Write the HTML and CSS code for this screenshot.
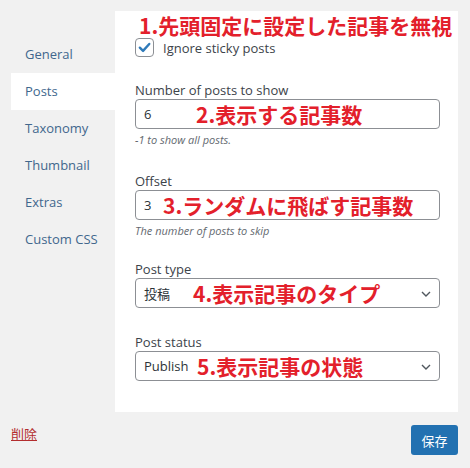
FILE: index.html
```html
<!DOCTYPE html>
<html lang="ja">
<head>
<meta charset="utf-8">
<link rel="stylesheet" href="styles.css">
</head>
<body>
<div class="wrap">
  <div class="main">
    <ul class="tabs">
      <li class="tab">General</li>
      <li class="tab active">Posts</li>
      <li class="tab">Taxonomy</li>
      <li class="tab">Thumbnail</li>
      <li class="tab">Extras</li>
      <li class="tab">Custom CSS</li>
    </ul>
    <div class="panel">
      <span class="note note1">1.先頭固定に設定した記事を無視</span>
      <label class="check-row">
        <span class="checkbox">
          <svg viewBox="0 0 20 20" width="20" height="20"><path d="M4.5 10.2 L8.3 14 L15.6 5.8" fill="none" stroke="#2f7ab9" stroke-width="2.8" stroke-linecap="round" stroke-linejoin="round"/></svg>
        </span>
        <span class="check-label">Ignore sticky posts</span>
      </label>

      <div class="field">
        <div class="label">Number of posts to show</div>
        <div class="control">
          <span class="value">6</span>
          <span class="note" style="left:60px">2.表示する記事数</span>
        </div>
        <div class="help">-1 to show all posts.</div>
      </div>

      <div class="field field-b">
        <div class="label">Offset</div>
        <div class="control">
          <span class="value">3</span>
          <span class="note" style="left:27px">3.ランダムに飛ばす記事数</span>
        </div>
        <div class="help">The number of posts to skip</div>
      </div>

      <div class="field">
        <div class="label">Post type</div>
        <div class="control select">
          <span class="value">投稿</span>
          <span class="note" style="left:57px">4.表示記事のタイプ</span>
          <svg class="chev" viewBox="0 0 10 6" width="10" height="6"><path d="M1 1 L5 5 L9 1" fill="none" stroke="#50575e" stroke-width="1.4"/></svg>
        </div>
      </div>

      <div class="field last">
        <div class="label">Post status</div>
        <div class="control select">
          <span class="value">Publish</span>
          <span class="note" style="left:61px">5.表示記事の状態</span>
          <svg class="chev" viewBox="0 0 10 6" width="10" height="6"><path d="M1 1 L5 5 L9 1" fill="none" stroke="#50575e" stroke-width="1.4"/></svg>
        </div>
      </div>
    </div>
  </div>
  <div class="footer">
    <a class="delete" href="#">削除</a>
    <button class="save">保存</button>
  </div>
</div>
</body>
</html>
```

FILE: styles.css
```css
* { box-sizing: border-box; }
html, body { margin: 0; padding: 0; }
body {
  background: #f1f1f1;
  font-family: "Open Sans", "Noto Sans CJK JP", sans-serif;
  font-size: 13px;
  color: #3c434a;
  width: 470px;
  height: 468px;
  overflow: hidden;
}
.wrap { padding: 11px 12px 0 11px; }
.main { display: flex; }
.tabs {
  list-style: none;
  margin: 0;
  padding: 25px 0 0 0;
  width: 104px;
  flex: none;
}
.tab {
  height: 37px;
  line-height: 37px;
  padding-left: 14px;
  color: #41678d;
  font-size: 13px;
}
.tab.active { background: #fff; }
.panel {
  position: relative;
  flex: 1;
  background: #fff;
  height: 401px;
  padding: 27px 18px 0 20px;
}
.note {
  position: absolute;
  color: #e3202b;
  font-family: "Noto Sans CJK JP", sans-serif;
  font-weight: 700;
  font-size: 21px;
  line-height: 30px;
  top: -1px;
  white-space: nowrap;
  letter-spacing: 0;
}
.note1 { left: 24px; top: 3px; line-height: 22px; }
.check-row {
  display: flex;
  align-items: center;
  height: 19px;
  margin-bottom: 24px;
}
.checkbox {
  width: 19px;
  height: 19px;
  border: 1px solid #8c8f94;
  border-radius: 4px;
  display: flex;
  align-items: center;
  justify-content: center;
  flex: none;
}
.checkbox svg { display: block; width: 17px; height: 17px; }
.check-label { margin-left: 9px; color: #3c434a; }
.field { margin-bottom: 25px; }
.field-b { margin-bottom: 22px; }
.field.last { margin-bottom: 0; }
.label { line-height: 18px; height: 18px; }
.control {
  position: relative;
  height: 30px;
  border: 1px solid #8c8f94;
  border-radius: 4px;
  display: flex;
  align-items: center;
  padding-left: 8px;
}
.value { color: #2c3338; font-size: 13px; }
.chev { position: absolute; right: 8px; top: 12px; }
.help {
  margin-top: 4px;
  line-height: 14px;
  font-size: 11px;
  font-style: italic;
  color: #646970;
}
.footer {
  display: flex;
  justify-content: space-between;
  align-items: flex-start;
  margin-top: 13px;
}
.delete {
  color: #b32d2e;
  text-decoration: underline;
  line-height: 18px;
  font-size: 13px;
}
.save {
  width: 47px;
  height: 30px;
  border: 0;
  border-radius: 3px;
  background: #2271b1;
  color: #fff;
  font-family: "Noto Sans CJK JP", sans-serif;
  font-size: 13px;
  padding: 0;
}
```
